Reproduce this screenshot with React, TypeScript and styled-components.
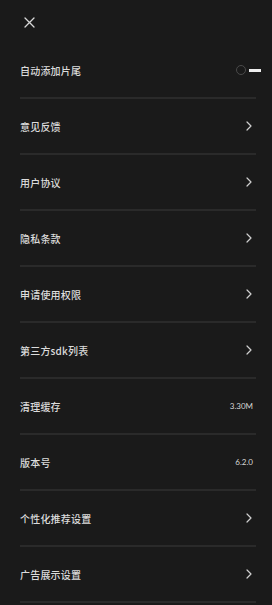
import React from "react";
import styled, { createGlobalStyle } from "styled-components";

const Global = createGlobalStyle`
  html, body { margin: 0; padding: 0; background: #1a1a1a; }
  body { font-family: "Noto Sans CJK SC", "Noto Sans", sans-serif; }
`;

const Page = styled.div`
  width: 272px;
  height: 605px;
  background: #1a1a1a;
  overflow: hidden;
  display: flex;
  flex-direction: column;
`;

const Header = styled.div`
  height: 43px;
  display: flex;
  align-items: center;
  padding-left: 24px;
`;

const CloseBtn = styled.button`
  width: 11px;
  height: 11px;
  padding: 0;
  border: none;
  background: none;
  display: flex;
  margin-top: 1px;
`;

const List = styled.div`
  display: flex;
  flex-direction: column;
  padding: 0 16px 0 20px;
`;

const Row = styled.div`
  height: 54px;
  display: flex;
  align-items: center;
  justify-content: space-between;
  border-bottom: 2px solid #2a2a2a;
`;

const Label = styled.span`
  font-size: 10px;
  font-weight: 500;
  color: #dcdcdc;
  letter-spacing: 0.2px;
`;

const Value = styled.span`
  font-family: "Lato", "Noto Sans", sans-serif;
  font-size: 8px;
  color: #d6d6d6;
  margin-right: 3px;
`;

const Chevron = styled.svg`
  width: 6px;
  height: 10px;
  margin-right: 4px;
`;

const Toggle = styled.div`
  display: flex;
  align-items: center;
  margin-right: -5px;
`;

const Knob = styled.div`
  width: 8px;
  height: 8px;
  border-radius: 50%;
  border: 1px solid #4a4a4a;
`;

const Track = styled.div`
  width: 12px;
  height: 3px;
  background: #eeeeee;
  margin-left: 3px;
`;

type Item = { label: string; kind: "toggle" | "arrow" | "value"; value?: string };

const items: Item[] = [
  { label: "自动添加片尾", kind: "toggle" },
  { label: "意见反馈", kind: "arrow" },
  { label: "用户协议", kind: "arrow" },
  { label: "隐私条款", kind: "arrow" },
  { label: "申请使用权限", kind: "arrow" },
  { label: "第三方sdk列表", kind: "arrow" },
  { label: "清理缓存", kind: "value", value: "3.30M" },
  { label: "版本号", kind: "value", value: "6.2.0" },
  { label: "个性化推荐设置", kind: "arrow" },
  { label: "广告展示设置", kind: "arrow" },
];

export default function App() {
  return (
    <Page>
      <Global />
      <Header>
        <CloseBtn aria-label="close">
          <svg width="11" height="11" viewBox="0 0 11 11">
            <path d="M1 1L10 10M10 1L1 10" stroke="#d8d8d8" strokeWidth="1.3" strokeLinecap="round" />
          </svg>
        </CloseBtn>
      </Header>
      <List>
        {items.map((it) => (
          <Row key={it.label}>
            <Label>{it.label}</Label>
            {it.kind === "toggle" && (
              <Toggle>
                <Knob />
                <Track />
              </Toggle>
            )}
            {it.kind === "arrow" && (
              <Chevron viewBox="0 0 6 10">
                <path d="M1 1L5 5L1 9" stroke="#cfcfcf" strokeWidth="1.2" fill="none" strokeLinecap="round" strokeLinejoin="round" />
              </Chevron>
            )}
            {it.kind === "value" && <Value>{it.value}</Value>}
          </Row>
        ))}
      </List>
    </Page>
  );
}
